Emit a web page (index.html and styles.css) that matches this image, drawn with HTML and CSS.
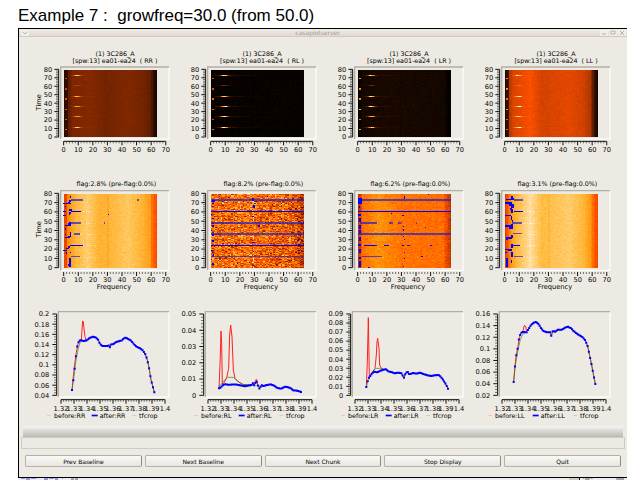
FILE: index.html
```
<!DOCTYPE html>
<html lang="en">
<head>
<meta charset="utf-8">
<title>casaplotserver</title>
<link rel="stylesheet" href="styles.css">
</head>
<body>
<h1 class="heading">Example 7 :&nbsp; growfreq=30.0 (from 50.0)</h1>
<main class="window">
  <header class="titlebar">
    <button class="wm" aria-label="Window menu"><svg viewBox="0 0 8 6"><path d="M2 2l2 2 2-2"/></svg></button>
    <span class="wm-title">casaplotserver</span>
    <span class="wm-group">
      <button class="wm" aria-label="Minimize"><svg viewBox="0 0 8 6"><path d="M2 4h4"/></svg></button>
      <button class="wm" aria-label="Maximize"><svg viewBox="0 0 8 6"><path d="M2 1h4v3H2z"/></svg></button>
      <button class="wm" aria-label="Close"><svg viewBox="0 0 8 6"><path d="M2 1l4 4M6 1L2 5"/></svg></button>
    </span>
  </header>
  <section class="plots" id="plots"></section>
  <div class="toolbar"></div>
  <div class="status"></div>
  <nav class="actions">
    <button class="action">Prev Baseline</button>
    <button class="action">Next Baseline</button>
    <button class="action">Next Chunk</button>
    <button class="action">Stop Display</button>
    <button class="action">Quit</button>
  </nav>
</main>
<div class="behind">
  <svg class="behind-left" viewBox="0 0 60 2"><path class="ink-blue" d="M3 0h4M8 1h4M13 0h5M26 1h4M31 0h5M37 1h3"/><path class="ink" d="M44 0h1M53 1h3M57 1h3"/></svg>
  <span class="behind-scroll"></span>
  <svg class="behind-right" viewBox="0 0 48 2"><path class="ink" d="M3 0h1M5 1h5M11 0h2M37 1h8"/></svg>
</div>
<script src="plots.js"></script>
</body>
</html>
```
FILE: styles.css
```
* { box-sizing: border-box; }
html { overflow: hidden; }
body {
  margin: 0;
  background: #fff;
  color: #000;
  font-family: "DejaVu Sans", sans-serif;
}
.heading {
  margin: 0;
  padding: 6px 0 2px 18px;
  font: 400 17px/20px "Liberation Sans", sans-serif;
  white-space: pre;
}
.window {
  margin: 0 13px 0 18px;
  border: solid #000;
  border-width: 1px 0 1px 1px;
  background: #edeae3;
}
.titlebar {
  display: flex;
  align-items: center;
  justify-content: space-between;
  height: 8px;
  padding: 0 1px 0 2px;
  background: linear-gradient(#f0ece6, #e0d9d1);
  border-bottom: 1px solid #d3c9bf;
}
.wm {
  width: 8px;
  height: 6px;
  padding: 0;
  border: 0;
  background: #f1eeea;
}
.wm svg {
  display: block;
  width: 8px;
  height: 6px;
  fill: none;
  stroke: #b9b0a7;
}
.wm-title {
  padding-left: 6px;
  font-size: 6px;
  line-height: 7px;
  color: #a59c93;
}
.wm-group { display: flex; gap: 1px; }
.plots {
  display: grid;
  grid-template-columns: repeat(4, 1fr);
  row-gap: 10px;
  padding: 8px 10px 1px;
}
.plot { display: block; width: 100%; height: auto; }
.plot text { font-size: 20px; fill: #000; }
.plot .small { font-size: 19px; }
.mid { text-anchor: middle; }
.end { text-anchor: end; }
.axis { stroke: #111; stroke-width: 3; fill: none; }
.minor { stroke: #333; stroke-width: 2; fill: none; }
.edge-dark { stroke: #b1aea7; stroke-width: 4; fill: none; }
.edge-light { stroke: #fcfcfa; stroke-width: 4; fill: none; }
.cells { shape-rendering: crispEdges; }
.flag { fill: #0000ff; shape-rendering: crispEdges; }
.flag-soft { fill: #2020d0; fill-opacity: 0.7; shape-rendering: crispEdges; }
.before { stroke: #ff2020; stroke-width: 3; fill: none; }
.fit { stroke: #1f8a1f; stroke-width: 2; fill: none; }
.after { fill: #0000ff; }
.key-before { fill: #f6c3bf; }
.key-after { fill: #0000ff; }
.key-fit { fill: #c3d6b9; }
.toolbar {
  height: 11px;
  margin: 0 4px;
  background: linear-gradient(#f6f5f3, #d8d6d2 50%, #bab8b3);
}
.status {
  height: 12px;
  margin: 0 2px;
  border: 1px solid #cfccc4;
}
.actions {
  display: grid;
  grid-template-columns: repeat(5, 1fr);
  gap: 3px;
  padding: 6px 6px 10px;
}
.action {
  height: 12px;
  padding: 0;
  border: 1px solid #b4b1a9;
  border-right-color: #8b8983;
  border-radius: 2px;
  background: linear-gradient(#faf9f7, #e9e6df);
  color: #000;
  font: 6px/9px "DejaVu Sans", sans-serif;
}
.behind {
  display: flex;
  height: 2px;
  margin: 0 13px 0 18px;
  background: #eeeef2;
}
.behind svg { height: 2px; }
.behind-left { width: 60px; }
.behind-right { width: 48px; border-left: 1px solid #000; }
.behind-scroll { width: 10px; margin-left: auto; background: #cfccc0; }
.ink { stroke: #555; }
.ink-blue { stroke: #3b3bd0; }
```
FILE: plots.js
```
// Every plot is drawn on a 441 x 360 canvas that scales with its grid cell.
const LEFT = 104, WIDTH = 280, CHANNELS = 64, TIMES = 80;
const CORR = ['RR', 'RL', 'LR', 'LL'];

let seed = 7;
function rand() {
  seed = (seed * 1664525 + 1013904223) % 4294967296;
  return seed / 4294967296;
}
function noise() { return rand() + rand() + rand() - 1.5; }

function interp(stops, x) {
  for (let i = 1; i < stops.length; i++) {
    const [x0, a] = stops[i - 1], [x1, b] = stops[i];
    if (x <= x1) return a + (b - a) * (x - x0) / (x1 - x0);
  }
  return stops[stops.length - 1][1];
}

const RED = [[0, 0], [.25, 122], [.5, 255], [1, 255]];
const GREEN = [[0, 0], [.25, 38], [.5, 80], [.65, 140], [.8, 190], [1, 255]];
const BLUE = [[0, 0], [.65, 0], [.8, 70], [1, 255]];
function hot(v) {
  return 'rgb(' + [RED, GREEN, BLUE].map(s => Math.round(interp(s, v))).join() + ')';
}

function heat(top, height, value) {
  const w = WIDTH / CHANNELS, h = height / TIMES, layers = {};
  for (let t = 0; t < TIMES; t++) {
    for (let c = 0; c < CHANNELS; c++) {
      const v = Math.max(0, Math.min(1, value(c, t)));
      const key = Math.round(v * 80) / 80;
      const x = (LEFT + c * w).toFixed(2), y = (top + height - (t + 1) * h).toFixed(2);
      layers[key] = (layers[key] || '') + `M${x} ${y}h${w + .1}v${h + .1}h-${w + .1}z`;
    }
  }
  const base = `<rect x="${LEFT}" y="${top}" width="${WIDTH}" height="${height}" fill="${hot(value(30, 5))}"/>`;
  return `<g class="cells">${base}${Object.keys(layers).map(k => `<path fill="${hot(+k)}" d="${layers[k]}"/>`).join('')}</g>`;
}

function frame(x0, y0, x1, y1) {
  return `<path class="edge-light" d="M${x0} ${y1}H${x1}V${y0}"/><path class="edge-dark" d="M${x0} ${y1}V${y0}H${x1}"/>`;
}

function yAxis(x, labels, y0, y1, labelX, sub) {
  let major = `M${x} ${y0}V${y1}`, minor = '', text = '';
  const step = (y1 - y0) / (labels.length - 1);
  labels.forEach((label, i) => {
    const y = y0 + step * i;
    major += `M${x} ${y}h-13`;
    text += `<text class="end" x="${labelX}" y="${Math.round(y + 7)}">${label}</text>`;
    if (i < labels.length - 1) for (let k = 1; k < sub; k++) minor += `M${x} ${y + step * k / sub}h-8`;
  });
  return `<path class="minor" d="${minor}"/><path class="axis" d="${major}"/>${text}`;
}

function xAxis(y, labels, x0, step, labelY, line) {
  let major = line ? `M${x0} ${y}H${x0 + step * (labels.length - 1)}` : '', minor = '', text = '';
  labels.forEach((label, i) => {
    const x = x0 + step * i;
    major += `M${x} ${y}v12`;
    text += `<text class="mid" x="${Math.round(x)}" y="${labelY}">${label}</text>`;
    if (i < labels.length - 1) for (let k = 1; k < 5; k++) minor += `M${x + step * k / 5} ${y}v6`;
  });
  return `<path class="minor" d="${minor}"/><path class="axis" d="${major}"/>${text}`;
}

const TIME_LABELS = [80, 70, 60, 50, 40, 30, 20, 10, 0];
const FREQ_LABELS = [0, 10, 20, 30, 40, 50, 60, 70];
const BURSTS = [73, 61, 48, 36, 24, 11], SPOTS = [69, 56, 44, 32, 20, 8];

const raw = [
  { base: [[0, .08], [2, .1], [3, .2], [6, .25], [18, .265], [28, .235], [44, .26], [54, .235], [59, .2], [61, .1], [63, .04]], noise: .01, burst: .55, tail: .04, spot: .4 },
  { base: [[0, .015], [63, .015]], noise: .012, burst: .85, tail: .16, spot: .5 },
  { base: [[0, .01], [3, .04], [20, .05], [59, .04], [61, .008], [63, .01]], noise: .014, burst: .75, tail: .1, spot: .7 },
  { base: [[0, .06], [2, .14], [3, .37], [6, .43], [17, .49], [25, .42], [44, .45], [54, .41], [58, .35], [61, .12], [63, .04]], noise: .018, burst: .5, tail: .03, spot: .55 }
];

const residual = [
  { base: [[0, .45], [1, .46], [2, .62], [4, .7], [8, .78], [16, .85], [24, .76], [30, .77], [44, .83], [54, .76], [59, .7], [60, .58], [63, .48]], noise: .025 },
  { base: [[0, .55], [20, .58], [48, .52], [58, .5], [61, .38], [63, .36]], noise: .27 },
  { base: [[0, .35], [2, .5], [3, .58], [14, .67], [22, .62], [30, .59], [58, .57], [60, .48], [63, .38]], noise: .06 },
  { base: [[0, .42], [2, .55], [4, .7], [8, .79], [17, .9], [25, .79], [44, .84], [54, .77], [58, .7], [61, .52], [63, .47]], noise: .025 }
];

// Flagged regions as [x, y, width, height]
const flags = [
  { dx: -27, title: '2.8', hard: [[130,83,22,4],[143,80,6,5],[148,74,5,8],[150,64,3,6],[152,107,32,4],[130,108,8,3],[130,119,9,4],[147,103,8,4],[148,110,6,8],[146,115,5,6],[135,94,4,3],[144,143,6,10],[148,140,6,12],[136,150,16,4],[135,160,4,4],[134,186,16,4],[143,182,10,4],[149,170,4,14],[135,176,3,4],[150,210,39,4],[143,214,7,4],[139,219,7,4],[130,224,10,5],[137,232,3,6],[149,232,3,3],[148,250,5,26],[145,268,6,4],[264,117,4,3]],
    soft: [[153,72,36,5],[152,142,31,5],[162,175,18,4],[153,243,27,4],[352,73,4,4],[251,142,4,4]] },
  { dx: -468, title: '8.2', hard: [[572,108,280,4],[572,210,280,4],[575,76,10,5],[577,84,6,4],[575,92,4,4],[573,116,4,3],[577,128,4,3],[575,150,6,5],[573,165,4,3],[577,178,4,4],[576,196,6,4],[574,224,5,4],[578,238,5,4],[576,264,5,6],[697,70,6,8],[699,90,5,10],[697,122,4,3],[697,200,8,4],[699,228,4,4],[696,270,6,3],[715,150,4,5],[757,158,3,4],[782,128,4,3],[832,196,5,3],[782,85,4,3],[650,263,4,3],[835,225,4,4],[740,64,4,3]],
    soft: [[572,72,280,5],[572,142,280,5],[572,174,280,5],[572,242,280,5]] },
  { dx: -9, title: '6.2', hard: [[113,108,280,4],[132,210,39,4],[192,210,15,4],[260,210,10,3],[330,210,6,3],[114,70,5,16],[118,68,7,20],[116,92,4,6],[114,118,10,4],[117,130,6,10],[116,150,6,12],[118,165,6,8],[116,185,7,14],[113,208,10,6],[117,222,6,12],[116,245,6,6],[118,258,5,18],[251,64,4,8],[247,120,4,3],[249,152,3,5],[249,162,3,5],[249,183,4,4],[251,191,4,4],[247,210,6,3],[253,232,3,3],[251,249,5,4],[249,272,4,4],[212,114,4,3],[315,155,4,4],[323,57,4,3],[145,275,5,3],[390,132,4,4],[304,243,5,4]],
    soft: [[113,72,280,5],[113,174,280,5],[120,142,52,5],[207,142,12,4],[235,142,8,4],[288,142,4,4],[126,243,60,4]] },
  { dx: -450, title: '3.1', hard: [[557,72,16,3],[573,62,6,12],[578,70,5,6],[556,82,20,5],[568,88,14,6],[574,94,7,5],[583,107,26,4],[570,98,5,8],[573,103,6,12],[555,119,18,4],[572,124,5,10],[575,134,5,8],[555,151,20,4],[572,146,8,14],[568,153,10,8],[557,187,18,4],[572,180,6,8],[557,190,6,5],[575,210,25,4],[573,206,6,14],[556,221,10,4],[565,222,12,5],[574,232,4,14],[556,230,5,4],[557,250,6,12],[559,262,5,14],[573,255,4,8]],
    soft: [[581,72,28,5],[577,142,28,5],[579,174,27,4],[582,243,27,4]] }
];

// Bandpass curves as [x, y]; the tail is shared by the curves of one plot
const curves = [
  { dx: -27, sub: 4, y: ['0.2', '0.18', '0.16', '0.14', '0.12', '0.1', '0.08', '0.06', '0.04'],
    after: [[156,255],[159,232],[162,212],[165,178],[169,143],[172,122],[177,108],[182,105],[190,108],[198,107]],
    before: [[156,255],[160,215],[165,170],[169,143],[173,120],[177,108],[184,104],[187,60],[188,48],[190,50],[192,72],[195,95],[198,107]],
    fit: [[156,255],[162,215],[166,180],[170,155],[175,130],[181,110],[190,107],[198,107]],
    tail: [[205,102],[213,97],[220,95],[228,98],[235,105],[240,117],[247,123],[262,123],[268,121],[270,128],[272,119],[280,117],[288,111],[297,109],[306,106],[312,100],[318,98],[325,102],[333,107],[340,115],[348,124],[355,128],[362,131],[370,138],[376,148],[382,165],[387,188],[390,206],[393,224],[398,243],[403,262]] },
  { dx: -18, sub: 5, y: ['0.05', '0.04', '0.03', '0.02', '0.01', '0'],
    after: [[147,250],[152,248],[158,241],[165,237],[176,240],[188,238],[200,239],[212,241],[226,244],[238,241],[244,241],[248,234],[252,241],[256,235],[259,227],[263,238],[266,248],[269,252],[274,240]],
    before: [[147,250],[150,180],[153,78],[155,115],[157,238],[163,232],[170,218],[176,190],[179,90],[182,60],[186,95],[190,195],[195,220],[205,230],[220,239],[240,240],[252,236],[259,223],[263,238],[268,248],[274,240]],
    fit: [[147,246],[158,232],[165,224],[172,217],[190,217],[197,224],[206,231],[218,238],[235,240],[250,238],[260,242],[268,245],[274,242]],
    tail: [[280,243],[290,240],[302,238],[312,242],[322,249],[334,251],[345,245],[354,247],[362,250],[370,256],[382,257],[393,261]] },
  { dx: -9, sub: 5, y: ['0.09', '0.08', '0.07', '0.06', '0.05', '0.04', '0.03', '0.02', '0.01', '0'],
    after: [[139,246],[143,228],[147,218],[152,211],[158,204],[163,200],[172,202],[180,198],[187,195],[192,194]],
    before: [[139,246],[142,170],[145,38],[146,90],[148,220],[152,210],[158,200],[165,190],[169,150],[171,110],[173,100],[177,130],[179,180],[184,190],[192,194]],
    fit: [[139,246],[146,220],[152,210],[160,198],[168,190],[178,190],[192,194]],
    tail: [[198,193],[205,199],[214,201],[224,205],[235,203],[245,205],[249,214],[252,219],[257,204],[263,200],[268,208],[278,204],[290,206],[300,203],[310,207],[322,211],[333,213],[344,211],[356,210],[362,215],[369,224],[376,235],[384,251]] },
  { dx: -450, sub: 4, y: ['0.16', '0.14', '0.12', '0.1', '0.08', '0.06', '0.04', '0.02'],
    after: [[581,231],[584,193],[588,155],[594,124],[597,100],[602,85],[610,80],[619,83]],
    before: [[581,231],[584,193],[588,155],[594,124],[598,98],[603,84],[609,78],[613,61],[618,66],[619,77]],
    fit: [[581,231],[586,180],[594,135],[601,104],[608,88],[619,81]],
    tail: [[625,73],[633,60],[640,54],[648,51],[655,56],[662,68],[670,78],[680,82],[690,82],[694,93],[698,78],[706,80],[714,74],[726,74],[735,68],[743,65],[752,69],[760,77],[768,84],[778,91],[787,96],[796,106],[803,124],[809,152],[815,180],[820,207],[826,237]] }
];

function bursts(cfg) {
  return (c, t) => {
    let v = interp(cfg.base, c) + noise() * cfg.noise * (c > 60 ? .5 : 1);
    const b = BURSTS.indexOf(t);
    if (b >= 0 && c > 2) {
      const k = b === 1 ? .25 : 1;
      v += k * (cfg.burst * Math.exp(-Math.pow((c - 9) / 2, 2)) + cfg.tail * Math.exp(-Math.abs(c - 9) / 9)) * (.75 + .5 * rand());
    }
    if (c === 1 && (SPOTS.includes(t) || SPOTS.includes(t - 1))) v += cfg.spot * (.8 + .3 * rand());
    if (c === 29) v -= .012;
    return v;
  };
}

function remainder(cfg, i) {
  return (c, t) => {
    let v = interp(cfg.base, c) + noise() * cfg.noise;
    if (i !== 1 && BURSTS.includes(t) && c > 8 && c < 30) v += (c % 2 ? .12 : -.03) * (30 - c) / 22;
    if (c === 30) v -= .03;
    if (i === 1 && c === 29) v += .15;
    return v;
  };
}

function rects(list, dx, cls) {
  return list.map(([x, y, w, h]) => `<rect class="${cls}" x="${x + dx}" y="${y}" width="${w}" height="${h}"/>`).join('');
}

function timeLabel(i, y) {
  return i ? '' : `<text class="mid" transform="translate(37 ${y}) rotate(-90)">Time</text>`;
}

function svg(label, body) {
  return `<svg class="plot" viewBox="0 0 441 360" role="img" aria-label="${label}">${body}</svg>`;
}

function rawPlot(i) {
  return svg('Spectrum ' + CORR[i],
    `<text class="small mid" x="258" y="32">(1) 3C286_A</text>
     <text class="small mid" x="258" y="53">[spw:13] ea01-ea24&#160; ( ${CORR[i]} )</text>` +
    frame(95, 66, 420, 282) + heat(75, 201, bursts(raw[i])) +
    yAxis(89, TIME_LABELS, 73, 276, 70, 5) + xAxis(289, FREQ_LABELS, 104, 43.75, 321, true) + timeLabel(i, 172));
}

function flagPlot(i) {
  const f = flags[i];
  return svg('Flags ' + CORR[i],
    `<text class="small mid" x="262" y="33">flag:${f.title}% (pre-flag:0.0%)</text>` +
    frame(95, 47, 420, 286) + heat(57, 221, remainder(residual[i], i)) +
    rects(f.soft, f.dx, 'flag-soft') + rects(f.hard, f.dx, 'flag') +
    yAxis(89, TIME_LABELS, 55, 278, 70, 5) + xAxis(291, FREQ_LABELS, 104, 43.75, 321, false) +
    `<text class="mid" x="255" y="343">Frequency</text>` + timeLabel(i, 163));
}

function curvePlot(i) {
  const p = curves[i];
  const path = pts => 'M' + pts.concat(p.tail).map(([x, y]) => `${x + p.dx} ${y}`).join('L');
  const pts = p.after.concat(p.tail), x0 = pts[0][0], x1 = pts[pts.length - 1][0];
  let dots = '';
  for (let c = 0; c < CHANNELS; c++) {
    const x = x0 + (x1 - x0) * c / (CHANNELS - 1);
    dots += `M${(x + p.dx - 3).toFixed(1)} ${(interp(pts, x) - 3).toFixed(1)}h6v6h-6z`;
  }
  const freq = ['1.32', '1.33', '1.34', '1.35', '1.36', '1.37', '1.38', '1.39', '1.4'];
  return svg('Bandpass ' + CORR[i],
    frame(88, 20, 420, 276) +
    `<path class="before" d="${path(p.before)}"/><path class="fit" d="${path(p.fit)}"/><path class="after" d="${dots}"/>` +
    yAxis(83, p.y, 27, 271, 61, p.sub) + xAxis(284, freq, 96, 39, 317, true) +
    `<rect class="key-before" x="54" y="330" width="12" height="3"/><text class="small" x="75" y="338">before:${CORR[i]}</text>
     <rect class="key-after" x="188" y="329" width="18" height="5"/><text class="small" x="212" y="338">after:${CORR[i]}</text>
     <rect class="key-fit" x="310" y="330" width="12" height="3"/><text class="small" x="330" y="338">tfcrop</text>`);
}

document.getElementById('plots').innerHTML =
  [rawPlot, flagPlot, curvePlot].map(draw => CORR.map((_, i) => draw(i)).join('')).join('');
```
